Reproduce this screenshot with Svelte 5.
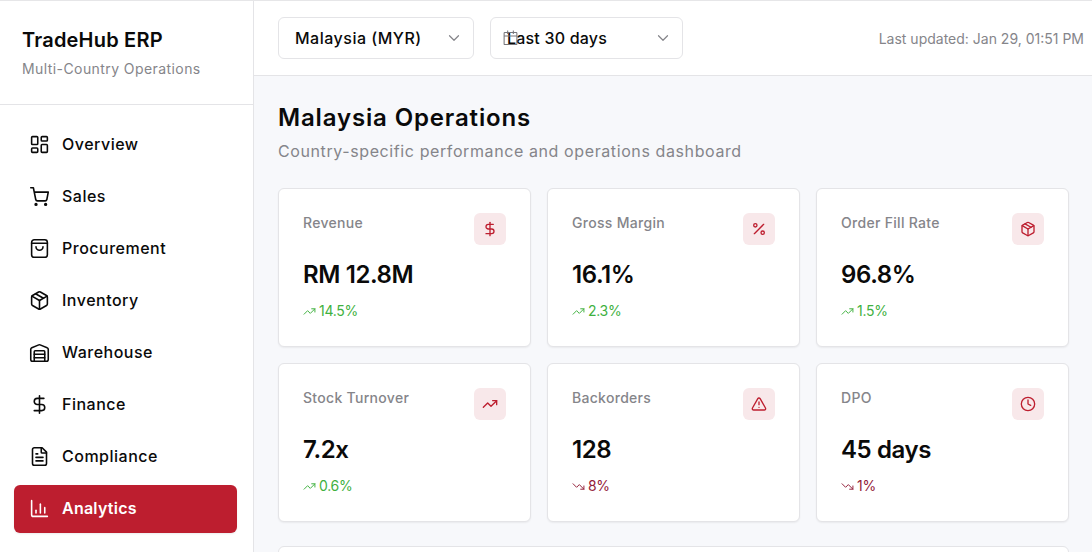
<script>
  const nav = [
    { label: 'Overview', icon: 'overview' },
    { label: 'Sales', icon: 'sales' },
    { label: 'Procurement', icon: 'bag' },
    { label: 'Inventory', icon: 'box' },
    { label: 'Warehouse', icon: 'warehouse' },
    { label: 'Finance', icon: 'dollar' },
    { label: 'Compliance', icon: 'file' },
    { label: 'Analytics', icon: 'chart', active: true }
  ];

  const kpis = [
    { label: 'Revenue', value: 'RM 12.8M', delta: '14.5%', up: true, icon: 'dollar' },
    { label: 'Gross Margin', value: '16.1%', delta: '2.3%', up: true, icon: 'percent' },
    { label: 'Order Fill Rate', value: '96.8%', delta: '1.5%', up: true, icon: 'box' },
    { label: 'Stock Turnover', value: '7.2x', delta: '0.6%', up: true, icon: 'trend' },
    { label: 'Backorders', value: '128', delta: '8%', up: false, icon: 'alert' },
    { label: 'DPO', value: '45 days', delta: '1%', up: false, icon: 'clock' }
  ];
</script>

{#snippet icon(name)}
  <svg class="icon" viewBox="0 0 24 24" fill="none" stroke="currentColor" stroke-width="2" stroke-linecap="round" stroke-linejoin="round">
    {#if name === 'overview'}
      <rect x="3" y="3" width="7" height="9" rx="1" /><rect x="14" y="3" width="7" height="5" rx="1" /><rect x="14" y="12" width="7" height="9" rx="1" /><rect x="3" y="16" width="7" height="5" rx="1" />
    {:else if name === 'sales'}
      <circle cx="8" cy="21" r="1" /><circle cx="19" cy="21" r="1" /><path d="M2 2h3l2.7 13.4a2 2 0 0 0 2 1.6h8.7a2 2 0 0 0 2-1.6L22 7H6" />
    {:else if name === 'bag'}
      <rect x="3" y="2" width="18" height="20" rx="3" /><path d="M3 6h18" /><path d="M16 10a4 4 0 0 1-8 0" />
    {:else if name === 'box'}
      <path d="M21 8a2 2 0 0 0-1-1.7l-7-4a2 2 0 0 0-2 0l-7 4A2 2 0 0 0 3 8v8a2 2 0 0 0 1 1.7l7 4a2 2 0 0 0 2 0l7-4a2 2 0 0 0 1-1.7Z" /><path d="m3.3 7 8.7 5 8.7-5" /><path d="M12 22V12" /><path d="m7.5 4.3 9 5.1" />
    {:else if name === 'warehouse'}
      <path d="M22 20V8.4a2 2 0 0 0-1.3-1.9l-8-3.2a2 2 0 0 0-1.5 0l-8 3.2A2 2 0 0 0 2 8.4V20a2 2 0 0 0 2 2h16a2 2 0 0 0 2-2Z" /><path d="M6 22V11a1 1 0 0 1 1-1h10a1 1 0 0 1 1 1v11" /><path d="M6 14h12" /><path d="M6 18h12" />
    {:else if name === 'dollar'}
      <path d="M12 2v20" /><path d="M17 5H9.5a3.5 3.5 0 0 0 0 7h5a3.5 3.5 0 0 1 0 7H6" />
    {:else if name === 'file'}
      <path d="M15 2H6a2 2 0 0 0-2 2v16a2 2 0 0 0 2 2h12a2 2 0 0 0 2-2V7Z" /><path d="M14 2v5a1 1 0 0 0 1 1h5" /><path d="M8 9h2" /><path d="M8 13h8" /><path d="M8 17h8" />
    {:else if name === 'chart'}
      <path d="M3 3v16a2 2 0 0 0 2 2h16" /><path d="M8 17v-3" /><path d="M13 17V7" /><path d="M18 17v-6" />
    {:else if name === 'percent'}
      <path d="M19 5 5 19" /><circle cx="6.5" cy="6.5" r="2.5" /><circle cx="17.5" cy="17.5" r="2.5" />
    {:else if name === 'trend'}
      <path d="m22 7-8.5 8.5-5-5L2 17" /><path d="M16 7h6v6" />
    {:else if name === 'alert'}
      <path d="m21.7 18-8-14a2 2 0 0 0-3.5 0l-8 14A2 2 0 0 0 4 21h16a2 2 0 0 0 1.7-3" /><path d="M12 9v4" /><path d="M12 17h.01" />
    {:else if name === 'clock'}
      <circle cx="12" cy="12" r="10" /><path d="M12 6v6l4 2" />
    {/if}
  </svg>
{/snippet}

{#snippet chevron()}
  <svg class="chevron" viewBox="0 0 24 24" fill="none" stroke="currentColor" stroke-width="1.6" stroke-linecap="round" stroke-linejoin="round"><path d="m6 9 6 6 6-6" /></svg>
{/snippet}

<div class="shell">
  <aside class="sidebar">
    <div class="brand">
      <h2>TradeHub ERP</h2>
      <p>Multi-Country Operations</p>
    </div>
    <nav>
      {#each nav as item}
        <div class="nav-item" class:active={item.active}>
          {@render icon(item.icon)}
          <span>{item.label}</span>
        </div>
      {/each}
    </nav>
  </aside>

  <div class="content">
    <header>
      <div class="select country"><span>Malaysia (MYR)</span>{@render chevron()}</div>
      <div class="select range">
        <svg class="cal" viewBox="0 0 24 24" fill="none" stroke="currentColor" stroke-width="1.5"><rect x="3" y="5" width="18" height="17" rx="1" /><path d="M8 2v5M16 2v5M3 10h18" /></svg>
        <span>Last 30 days</span>{@render chevron()}
      </div>
      <div class="updated">Last updated: Jan 29, 01:51 PM</div>
    </header>

    <main>
      <h1>Malaysia Operations</h1>
      <p class="sub">Country-specific performance and operations dashboard</p>

      <div class="grid">
        {#each kpis as k}
          <div class="card">
            <div class="card-top">
              <span class="label">{k.label}</span>
              <span class="badge">{@render icon(k.icon)}</span>
            </div>
            <div class="value">{k.value}</div>
            <div class="delta" class:down={!k.up}>
              <svg viewBox="0 0 24 24" fill="none" stroke="currentColor" stroke-width="1.8" stroke-linecap="round" stroke-linejoin="round">
                {#if k.up}
                  <path d="m22 7-8.5 8.5-5-5L2 17" /><path d="M16 7h6v6" />
                {:else}
                  <path d="m22 17-8.5-8.5-5 5L2 7" /><path d="M16 17h6v-6" />
                {/if}
              </svg>
              <span>{k.delta}</span>
            </div>
          </div>
        {/each}
      </div>

      <div class="panel"></div>
    </main>
  </div>
</div>

<style>
  :global(body) {
    margin: 0;
    overflow: hidden;
  }

  .shell {
    display: flex;
    height: 552px;
    box-sizing: border-box;
    border-top: 1px solid #e6e6e8;
    overflow: hidden;
    font-family: Inter, 'Noto Sans', sans-serif;
    color: #0a0a0a;
    background: #f7f8fb;
  }

  .sidebar {
    width: 254px;
    flex: none;
    box-sizing: border-box;
    background: #fff;
    border-right: 1px solid #e4e4e7;
  }

  .brand {
    height: 104px;
    box-sizing: border-box;
    padding: 26px 22px 0;
    border-bottom: 1px solid #e4e4e7;
  }

  .brand h2 {
    margin: 0;
    font-size: 20px;
    line-height: 26px;
    font-weight: 600;
    letter-spacing: 0.2px;
  }

  .brand p {
    margin: 6px 0 0;
    font-size: 14px;
    line-height: 20px;
    color: #85858a;
    letter-spacing: 0.42px;
  }

  nav {
    display: flex;
    flex-direction: column;
    gap: 4px;
    padding: 16px 16px 0 14px;
  }

  .nav-item {
    display: flex;
    align-items: center;
    gap: 12px;
    height: 48px;
    box-sizing: border-box;
    padding: 0 15px 2px;
    border-radius: 6px;
    font-size: 16px;
    font-weight: 500;
    letter-spacing: 0.5px;
  }

  .nav-item .icon {
    width: 21px;
    height: 21px;
    stroke-width: 1.8;
  }

  .nav-item.active {
    background: #bd1e2f;
    color: #fff;
    font-weight: 600;
    letter-spacing: 0.25px;
    box-shadow: 0 1px 2px rgba(0, 0, 0, 0.08);
  }

  .content {
    flex: 1;
    min-width: 0;
  }

  header {
    display: flex;
    align-items: center;
    gap: 16px;
    height: 75px;
    box-sizing: border-box;
    padding: 0 8px 0 24px;
    background: #fff;
    border-bottom: 1px solid #e4e4e7;
  }

  .select {
    position: relative;
    display: flex;
    align-items: center;
    justify-content: space-between;
    height: 42px;
    box-sizing: border-box;
    border: 1px solid #e4e4e7;
    border-radius: 6px;
    font-size: 16px;
    font-weight: 500;
    padding: 0 10px 0 16px;
    background: #fff;
  }

  .country {
    width: 196px;
    letter-spacing: 0.5px;
  }

  .range {
    width: 193px;
    letter-spacing: 0.2px;
  }

  .chevron {
    width: 18px;
    height: 18px;
    color: #85858a;
  }

  .cal {
    position: absolute;
    left: 11px;
    top: 11px;
    width: 17px;
    height: 17px;
    color: #77777c;
  }

  .updated {
    margin-left: auto;
    font-size: 14px;
    color: #85858a;
  }

  main {
    padding: 25px 23px 0 24px;
  }

  h1 {
    margin: 0;
    font-size: 24px;
    line-height: 34px;
    font-weight: 600;
    letter-spacing: 0.85px;
  }

  .sub {
    margin: 4px 0 0;
    font-size: 16px;
    line-height: 24px;
    color: #85858a;
    letter-spacing: 0.6px;
  }

  .grid {
    display: grid;
    grid-template-columns: repeat(3, 1fr);
    gap: 16px;
    margin-top: 25px;
  }

  .card {
    height: 159px;
    box-sizing: border-box;
    padding: 24px;
    background: #fff;
    border: 1px solid #e4e4e7;
    border-radius: 6px;
    box-shadow: 0 1px 2px rgba(0, 0, 0, 0.06);
  }

  .card-top {
    display: flex;
    justify-content: space-between;
    align-items: flex-start;
    height: 32px;
  }

  .label {
    font-size: 14px;
    line-height: 20px;
    font-weight: 500;
    color: #85858a;
    letter-spacing: 0.3px;
  }

  .badge {
    display: flex;
    align-items: center;
    justify-content: center;
    width: 32px;
    height: 32px;
    border-radius: 6px;
    background: #f8e8ea;
    color: #bd1e2f;
  }

  .badge .icon {
    width: 16px;
    height: 16px;
  }

  .value {
    margin-top: 12px;
    font-size: 24px;
    line-height: 36px;
    font-weight: 600;
    letter-spacing: -0.4px;
  }

  .delta {
    display: flex;
    align-items: center;
    gap: 3px;
    margin-top: 8px;
    font-size: 14px;
    line-height: 20px;
    color: #3fb13f;
    letter-spacing: -0.3px;
  }

  .delta svg {
    width: 13px;
    height: 13px;
  }

  .delta.down {
    color: #93203a;
  }

  .panel {
    margin-top: 24px;
    height: 160px;
    background: #fff;
    border: 1px solid #e4e4e7;
    border-radius: 6px;
  }
</style>
